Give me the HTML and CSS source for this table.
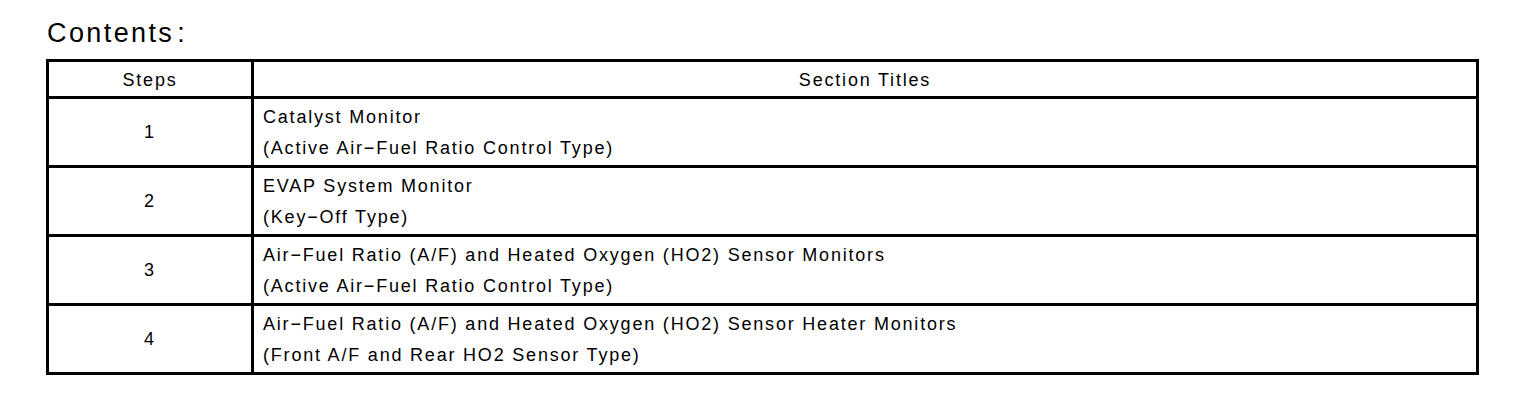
FILE: index.html
```html
<!DOCTYPE html>
<html>
<head>
<meta charset="utf-8">
<link rel="stylesheet" href="styles.css">
</head>
<body>
<div class="page">
  <h1 class="title">Contents<span class="colon">:</span></h1>
  <table class="contents">
    <thead>
      <tr class="head-row">
        <th class="steps">Steps</th>
        <th class="titles">Section Titles</th>
      </tr>
    </thead>
    <tbody>
      <tr class="row">
        <td class="num">1</td>
        <td class="desc">Catalyst Monitor<br>(Active Air−Fuel Ratio Control Type)</td>
      </tr>
      <tr class="row">
        <td class="num">2</td>
        <td class="desc">EVAP System Monitor<br>(Key−Off Type)</td>
      </tr>
      <tr class="row">
        <td class="num">3</td>
        <td class="desc">Air−Fuel Ratio (A/F) and Heated Oxygen (HO2) Sensor Monitors<br>(Active Air−Fuel Ratio Control Type)</td>
      </tr>
      <tr class="row">
        <td class="num">4</td>
        <td class="desc">Air−Fuel Ratio (A/F) and Heated Oxygen (HO2) Sensor Heater Monitors<br>(Front A/F and Rear HO2 Sensor Type)</td>
      </tr>
    </tbody>
  </table>
</div>
</body>
</html>
```
FILE: styles.css
```css
html, body {
  margin: 0;
  padding: 0;
  background: #fff;
}
body {
  font-family: "Liberation Sans", Arial, sans-serif;
  color: #000;
}
.page {
  padding: 17px 0 0 46px;
}
.title {
  margin: 0 0 10px 1px;
  font-size: 27px;
  font-weight: normal;
  line-height: 32px;
  letter-spacing: 2.4px;
}
.title .colon {
  margin-left: 3px;
}
.contents {
  width: 1433px;
  border-collapse: collapse;
  font-size: 18px;
  letter-spacing: 1.8px;
}
.contents th,
.contents td {
  border: 3px solid #000;
  padding: 0;
  font-weight: normal;
}
.head-row th {
  height: 32px;
  padding-top: 2px;
  text-align: center;
  vertical-align: middle;
}
.steps {
  width: 202px;
}
.row td {
  height: 65px;
  padding-top: 1px;
  vertical-align: middle;
}
.num {
  text-align: center;
}
.desc {
  text-align: left;
  padding-left: 9px !important;
  line-height: 31px;
}
```
